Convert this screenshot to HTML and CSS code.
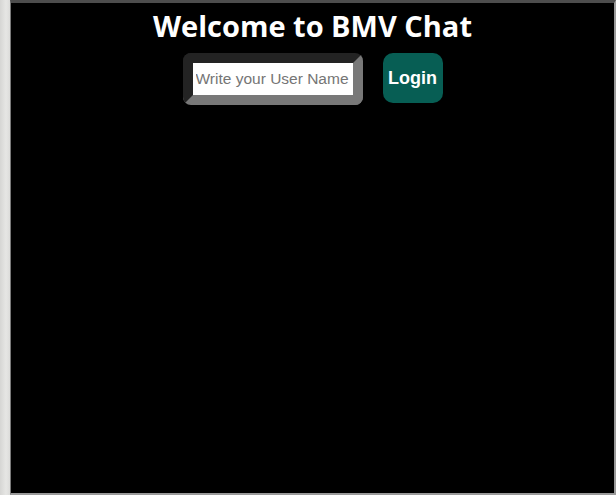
FILE: index.html
```html
<!DOCTYPE html>
<html>
<head>
<meta charset="utf-8">
<link rel="stylesheet" href="styles.css">
</head>
<body>
<div class="frame">
  <h1 class="title">Welcome to BMV Chat</h1>
  <div class="login-row">
    <input class="username" type="text" placeholder="Write your User Name">
    <button class="login-btn">Login</button>
  </div>
</div>
</body>
</html>
```
FILE: styles.css
```css
html, body {
  margin: 0;
  padding: 0;
  height: 100%;
}
body {
  background: linear-gradient(to right, #d6d6d4 0px, #e6e6e4 6px, #dcdcda 10px);
  padding-left: 10px;
  box-sizing: border-box;
}
.frame {
  box-sizing: border-box;
  height: 495px;
  background: #000;
  border-left: 1px solid #7a7a7a;
  border-top: 3px solid #4d4d4d;
  border-right: 2px solid #9a9a9a;
  border-bottom: 2px solid #9a9a9a;
  display: flex;
  flex-direction: column;
  align-items: center;
}
.title {
  margin: 3px 0 0 0;
  font-family: "Open Sans", sans-serif;
  font-weight: 700;
  font-size: 29px;
  line-height: 40px;
  color: #fff;
}
.login-row {
  display: flex;
  align-items: flex-start;
  margin-top: 7px;
  gap: 20px;
}
.username {
  box-sizing: border-box;
  width: 180px;
  height: 52px;
  border-style: solid;
  border-width: 10px;
  border-color: #232323 #787878 #787878 #232323;
  border-radius: 8px;
  padding: 0 3px;
  font-family: "Liberation Sans", Arial, sans-serif;
  font-size: 15.5px;
  background: #fff;
  outline: none;
}
.username::placeholder {
  color: #757575;
}
.login-btn {
  width: 60px;
  height: 50px;
  border: none;
  border-radius: 10px;
  background: #075e54;
  color: #fff;
  font-family: "Liberation Sans", Arial, sans-serif;
  font-weight: 700;
  font-size: 18px;
  padding: 0;
}
```
